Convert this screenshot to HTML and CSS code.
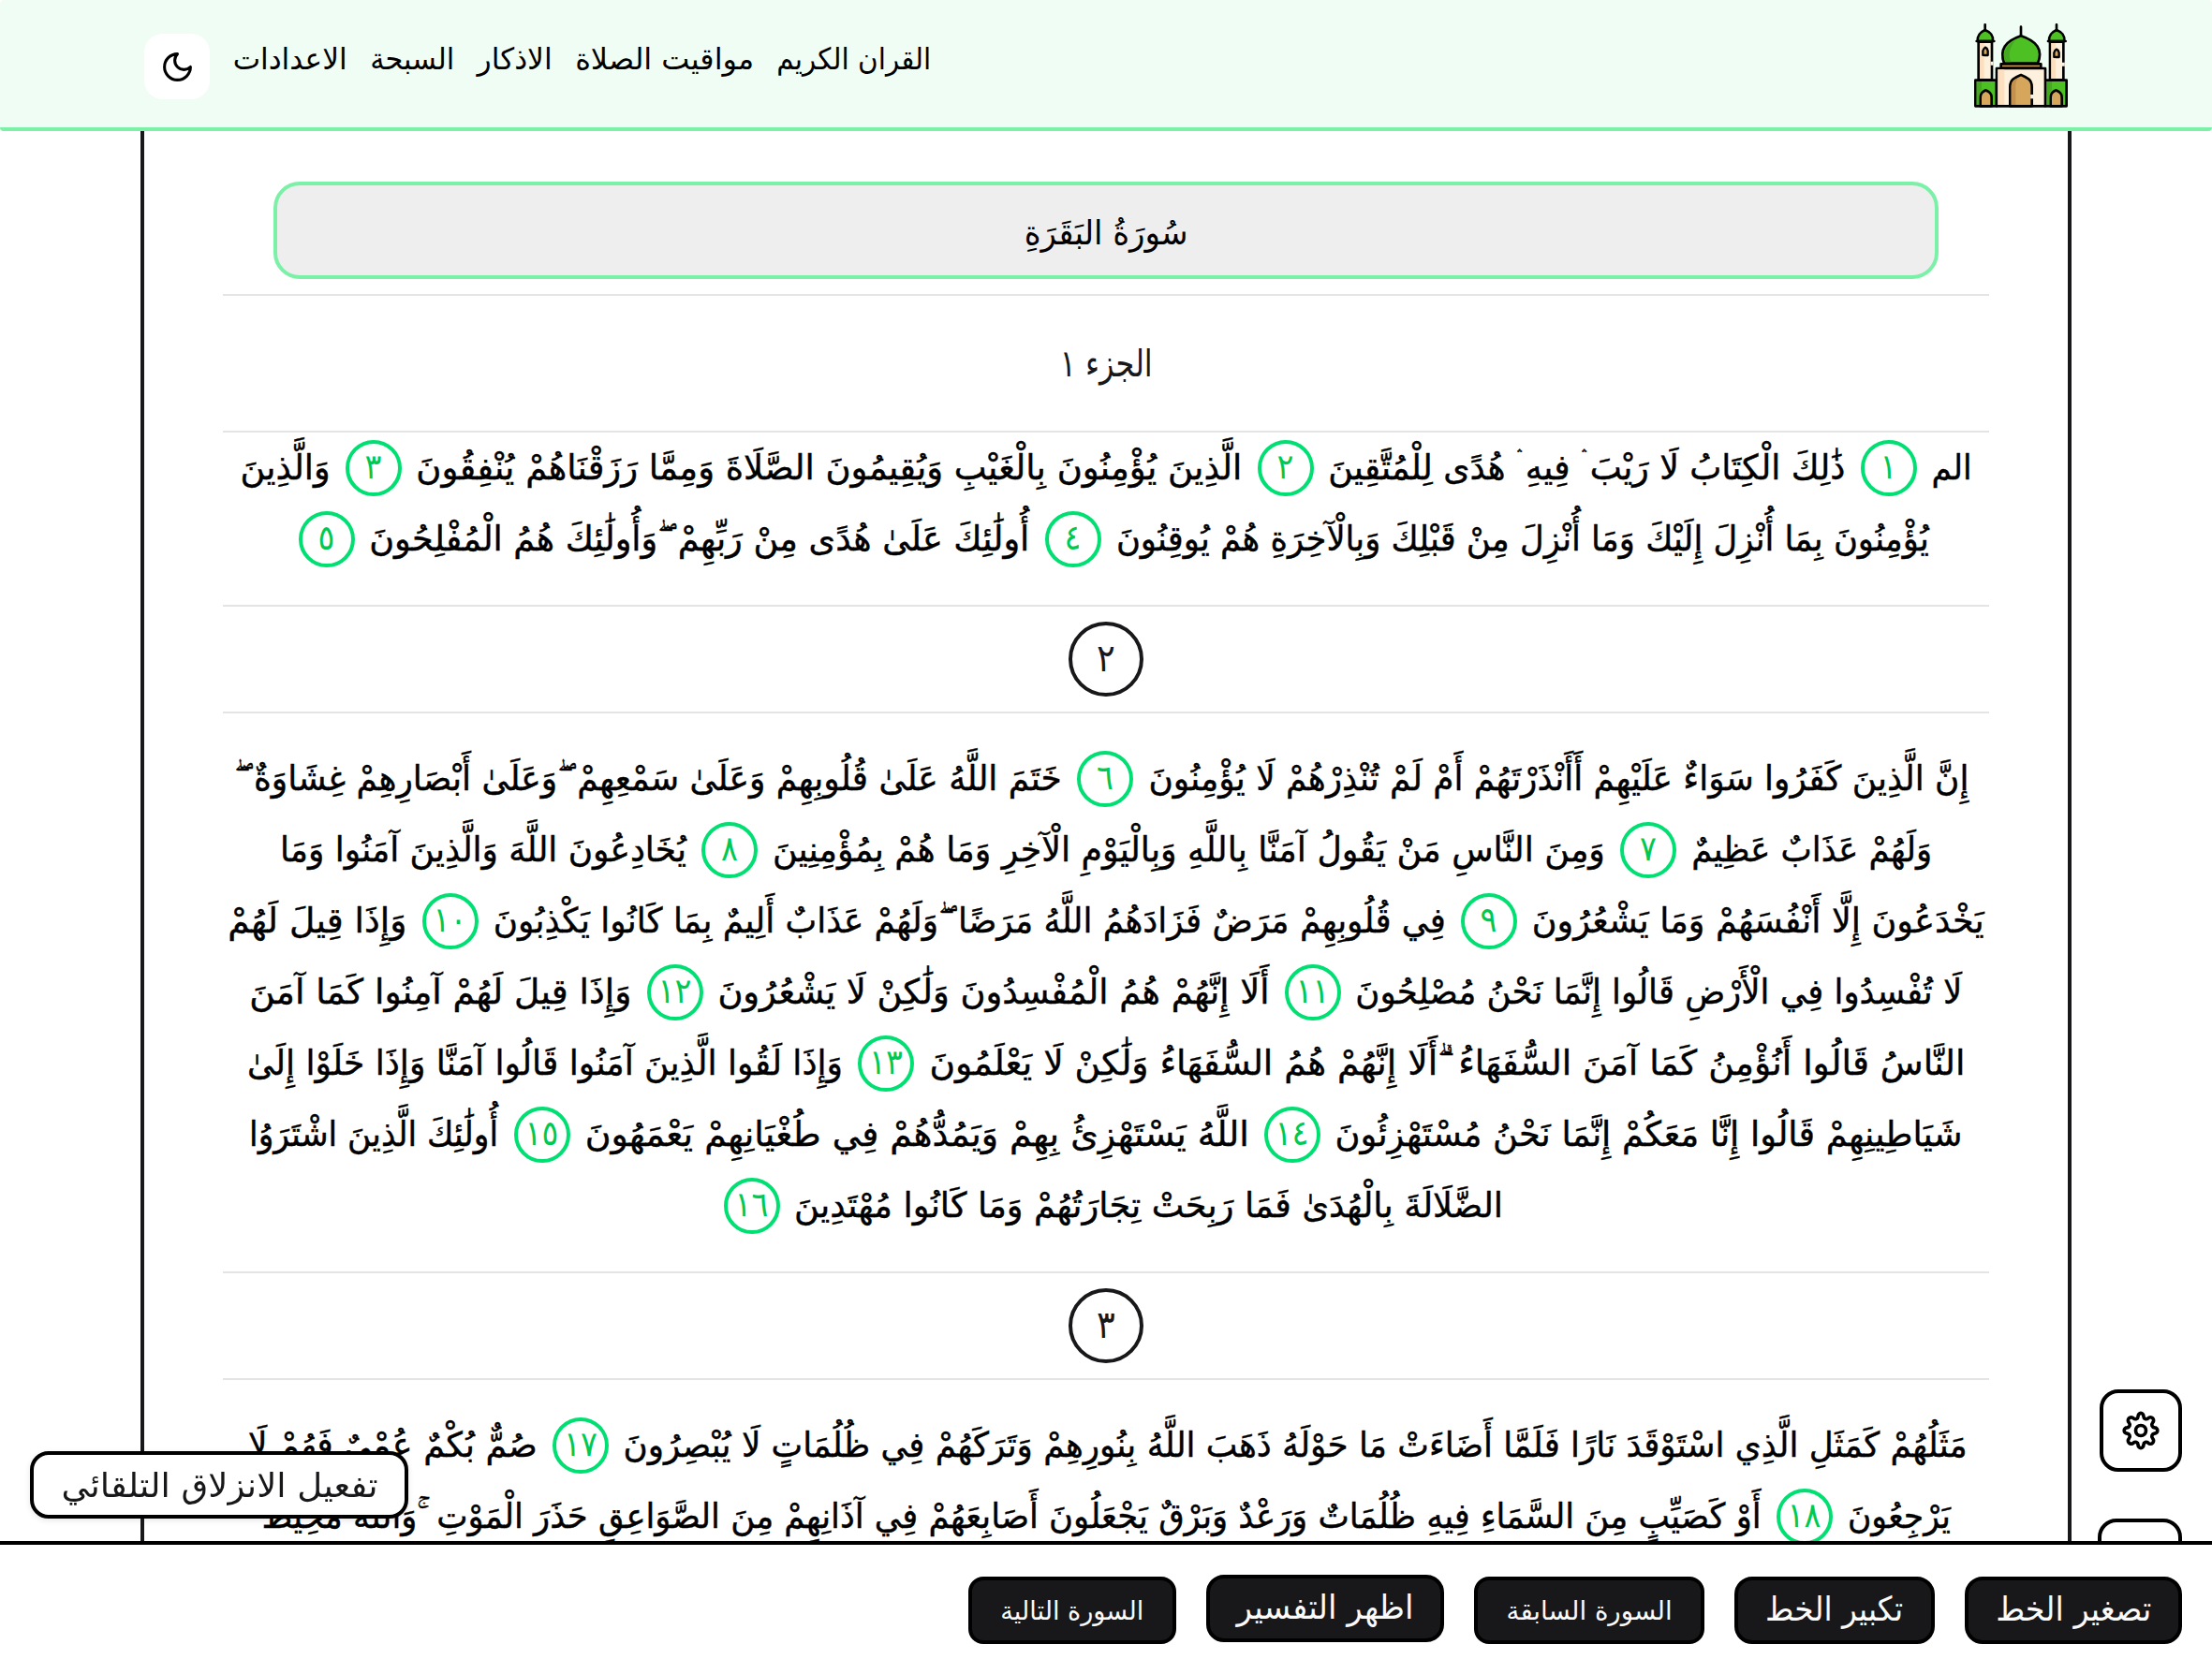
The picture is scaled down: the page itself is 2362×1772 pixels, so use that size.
FILE: index.html
```html
<!DOCTYPE html>
<html lang="ar" dir="rtl">
<head>
<meta charset="utf-8">
<title>سورة البقرة</title>
<link rel="stylesheet" href="styles.css">
</head>
<body>
<header class="header">
  <svg class="logo" viewBox="84 75 300 270" aria-hidden="true">
    <g stroke="#000" stroke-width="8" stroke-linejoin="round" stroke-linecap="round">
      <path fill="none" d="M119 79V96M348 79V96M234 86V115"/>
      <path fill="#fdf0dc" d="M98 134H141V256H98ZM327 134H370V256H327Z"/>
      <path fill="#4dc124" d="M95 132C94 110 106 102 119 96C134 102 146 110 144 132ZM324 132C323 110 335 102 348 96C363 102 375 110 373 132Z"/>
      <path fill="none" d="M92 132H148M321 132H377"/>
      <path fill="#4dc124" d="M180 203C164 158 184 132 234 115C284 132 306 158 288 203Z"/>
      <path fill="#d6a65c" d="M170 205H298V218H170Z"/>
      <path fill="#4dc124" d="M88 257H156V340H88ZM312 257H380V340H312Z"/>
      <path fill="#fdf0dc" d="M156 219H312V340H156Z"/>
      <path fill="#d6a65c" d="M199 340V278C199 256 214 248 234 240C254 248 269 256 269 278V340Z"/>
      <path fill="#d6a65c" d="M104 340V312C104 298 112 294 121 289C131 294 140 298 140 312V340ZM329 340V312C329 298 337 294 346 289C356 294 365 298 365 312V340Z"/>
      <path fill="#d6a65c" stroke-width="7" d="M112 177V163Q114 154 120 152Q126 154 128 163V177ZM340 183V169Q342 160 348 158Q354 160 356 169V183Z"/>
    </g>
    <path fill="#46a822" d="M184 199C172 164 190 142 217 128C194 156 195 179 202 199ZM92 261H108V286Q101 296 100 306V336H92ZM316 261H333V286Q326 296 325 306V336H316Z"/>
    <path fill="#fbdfbe" d="M102 138H116V150L108 160V181H116V252H102ZM331 138H345V152L336 166V187H345V252H331ZM160 223H181V336H160Z"/>
    <path fill="#c4924f" d="M203 336V280C203 262 210 256 225 250C217 262 217 270 217 280V336Z"/>
    <path stroke="#fdf0dc" stroke-width="9" d="M141 197V209M370 200V212"/>
    <path stroke="#fdf0dc" stroke-width="9" d="M269 303V316"/>
  </svg>
  <nav class="nav">
    <a class="nav-link fit" data-w="165">القران الكريم</a>
    <a class="nav-link fit" data-w="191">مواقيت الصلاة</a>
    <a class="nav-link fit" data-w="80">الاذكار</a>
    <a class="nav-link fit" data-w="90">السبحة</a>
    <a class="nav-link fit" data-w="122">الاعدادات</a>
    <button class="theme" aria-label="الوضع الليلي">
      <svg viewBox="0 0 24 24"><path d="M12 3a6 6 0 0 0 9 9 9 9 0 1 1-9-9Z"/></svg>
    </button>
  </nav>
</header>

<main class="page">
  <h1 class="surah"><span class="fit" data-w="175">سُورَةُ البَقَرَةِ</span></h1>
  <div class="juz"><span class="fit" data-w="99">الجزء ١</span></div>

  <section class="verses verses--first">
    <div class="row"><span class="fit" data-w="43">الم</span><b class="num">١</b><span class="fit" data-w="552">ذَٰلِكَ الْكِتَابُ لَا رَيْبَ ۛ فِيهِ ۛ هُدًى لِلْمُتَّقِينَ</span><b class="num">٢</b><span class="fit" data-w="882">الَّذِينَ يُؤْمِنُونَ بِالْغَيْبِ وَيُقِيمُونَ الصَّلَاةَ وَمِمَّا رَزَقْنَاهُمْ يُنْفِقُونَ</span><b class="num">٣</b><span class="fit" data-w="96">وَالَّذِينَ</span></div>
    <div class="row"><span class="fit" data-w="868">يُؤْمِنُونَ بِمَا أُنْزِلَ إِلَيْكَ وَمَا أُنْزِلَ مِنْ قَبْلِكَ وَبِالْآخِرَةِ هُمْ يُوقِنُونَ</span><b class="num">٤</b><span class="fit" data-w="705">أُولَٰئِكَ عَلَىٰ هُدًى مِنْ رَبِّهِمْ&nbsp;&nbsp;ۖوَأُولَٰئِكَ هُمُ الْمُفْلِحُونَ</span><b class="num">٥</b></div>
  </section>

  <div class="marker"><span>٢</span></div>

  <section class="verses">
    <div class="row row--pause"><span class="fit" data-w="876">إِنَّ الَّذِينَ كَفَرُوا سَوَاءٌ عَلَيْهِمْ أَأَنْذَرْتَهُمْ أَمْ لَمْ تُنْذِرْهُمْ لَا يُؤْمِنُونَ</span><b class="num">٦</b><span class="fit" data-w="884">خَتَمَ اللَّهُ عَلَىٰ قُلُوبِهِمْ وَعَلَىٰ سَمْعِهِمْ&nbsp;&nbsp;ۖوَعَلَىٰ أَبْصَارِهِمْ غِشَاوَةٌ&nbsp;&nbsp;ۖ</span></div>
    <div class="row"><span class="fit" data-w="257">وَلَهُمْ عَذَابٌ عَظِيمٌ</span><b class="num">٧</b><span class="fit" data-w="889">وَمِنَ النَّاسِ مَنْ يَقُولُ آمَنَّا بِاللَّهِ وَبِالْيَوْمِ الْآخِرِ وَمَا هُمْ بِمُؤْمِنِينَ</span><b class="num">٨</b><span class="fit" data-w="434">يُخَادِعُونَ اللَّهَ وَالَّذِينَ آمَنُوا وَمَا</span></div>
    <div class="row"><span class="fit" data-w="483">يَخْدَعُونَ إِلَّا أَنْفُسَهُمْ وَمَا يَشْعُرُونَ</span><b class="num">٩</b><span class="fit" data-w="1017">فِي قُلُوبِهِمْ مَرَضٌ فَزَادَهُمُ اللَّهُ مَرَضًا&nbsp;&nbsp;ۖوَلَهُمْ عَذَابٌ أَلِيمٌ بِمَا كَانُوا يَكْذِبُونَ</span><b class="num">١٠</b><span class="fit" data-w="191">وَإِذَا قِيلَ لَهُمْ</span></div>
    <div class="row"><span class="fit" data-w="648">لَا تُفْسِدُوا فِي الْأَرْضِ قَالُوا إِنَّمَا نَحْنُ مُصْلِحُونَ</span><b class="num">١١</b><span class="fit" data-w="589">أَلَا إِنَّهُمْ هُمُ الْمُفْسِدُونَ وَلَٰكِنْ لَا يَشْعُرُونَ</span><b class="num">١٢</b><span class="fit" data-w="408">وَإِذَا قِيلَ لَهُمْ آمِنُوا كَمَا آمَنَ</span></div>
    <div class="row"><span class="fit" data-w="1106">النَّاسُ قَالُوا أَنُؤْمِنُ كَمَا آمَنَ السُّفَهَاءُ&nbsp;&nbsp;ۗأَلَا إِنَّهُمْ هُمُ السُّفَهَاءُ وَلَٰكِنْ لَا يَعْلَمُونَ</span><b class="num">١٣</b><span class="fit" data-w="636">وَإِذَا لَقُوا الَّذِينَ آمَنُوا قَالُوا آمَنَّا وَإِذَا خَلَوْا إِلَىٰ</span></div>
    <div class="row"><span class="fit" data-w="670">شَيَاطِينِهِمْ قَالُوا إِنَّا مَعَكُمْ إِنَّمَا نَحْنُ مُسْتَهْزِئُونَ</span><b class="num">١٤</b><span class="fit" data-w="709">اللَّهُ يَسْتَهْزِئُ بِهِمْ وَيَمُدُّهُمْ فِي طُغْيَانِهِمْ يَعْمَهُونَ</span><b class="num">١٥</b><span class="fit" data-w="266">أُولَٰئِكَ الَّذِينَ اشْتَرَوُا</span></div>
    <div class="row"><span class="fit" data-w="757">الضَّلَالَةَ بِالْهُدَىٰ فَمَا رَبِحَتْ تِجَارَتُهُمْ وَمَا كَانُوا مُهْتَدِينَ</span><b class="num">١٦</b></div>
  </section>

  <div class="marker"><span>٣</span></div>

  <section class="verses">
    <div class="row row--shift"><span class="fit" data-w="1435">مَثَلُهُمْ كَمَثَلِ الَّذِي اسْتَوْقَدَ نَارًا فَلَمَّا أَضَاءَتْ مَا حَوْلَهُ ذَهَبَ اللَّهُ بِنُورِهِمْ وَتَرَكَهُمْ فِي ظُلُمَاتٍ لَا يُبْصِرُونَ</span><b class="num">١٧</b><span class="fit" data-w="309">صُمٌّ بُكْمٌ عُمْيٌ فَهُمْ لَا</span></div>
    <div class="row"><span class="fit" data-w="110">يَرْجِعُونَ</span><b class="num">١٨</b><span class="fit" data-w="1601">أَوْ كَصَيِّبٍ مِنَ السَّمَاءِ فِيهِ ظُلُمَاتٌ وَرَعْدٌ وَبَرْقٌ يَجْعَلُونَ أَصَابِعَهُمْ فِي آذَانِهِمْ مِنَ الصَّوَاعِقِ حَذَرَ الْمَوْتِ&nbsp;&nbsp;ۚوَاللَّهُ مُحِيطٌ</span></div>
  </section>
</main>

<div class="side">
  <button class="tool" aria-label="الاعدادات">
    <svg viewBox="0 0 24 24"><circle cx="12" cy="12" r="3"/><path d="M10.4 3.7a1.6 1.9 0 0 1 3.2 0c.1 1.6 1.6 2.1 2.7 1.1a1.65 1.65 0 0 1 2.6 2.6c-1 1.2-.4 2.7 1.1 2.9a1.65 1.65 0 0 1 0 3.4c-1.5.2-2.1 1.7-1.1 2.9a1.65 1.65 0 0 1-2.6 2.6c-1.1-1-2.6-.5-2.7 1.1a1.6 1.9 0 0 1-3.2 0c-.1-1.6-1.6-2.1-2.7-1.1a1.65 1.65 0 0 1-2.6-2.6c1-1.2.4-2.7-1.1-2.9a1.65 1.65 0 0 1 0-3.4c1.5-.2 2.1-1.7 1.1-2.9a1.65 1.65 0 0 1 2.6-2.6c1.1 1 2.6.5 2.7-1.1Z"/></svg>
  </button>
  <button class="tool tool--wide" aria-label="المزيد"></button>
</div>

<button class="auto"><span class="fit" data-w="338">تفعيل الانزلاق التلقائي</span></button>

<footer class="bar">
  <button class="btn" style="width:232px"><span class="fit" data-w="166">تصغير الخط</span></button>
  <button class="btn" style="width:214px"><span class="fit" data-w="147">تكبير الخط</span></button>
  <button class="btn btn--small" style="width:246px"><span class="fit" data-w="177">السورة السابقة</span></button>
  <button class="btn btn--raised" style="width:254px"><span class="fit" data-w="189">اظهر التفسير</span></button>
  <button class="btn btn--small" style="width:222px"><span class="fit" data-w="153">السورة التالية</span></button>
</footer>
<script src="fit.js"></script>
</body>
</html>
```
FILE: styles.css
```css
* { box-sizing: border-box; margin: 0; }
html, body { height: 100%; overflow: hidden; }
body {
  font-family: "DejaVu Sans Condensed", "DejaVu Sans", sans-serif;
  background: #fff;
  color: #000;
  display: flex;
  flex-direction: column;
}
button { font: inherit; padding: 0; display: flex; align-items: center; justify-content: center; }
.fit { display: inline-block; flex: none; white-space: nowrap; transform-origin: right center; }

.header {
  flex: none;
  height: 140px;
  padding: 0 154px;
  background: #f0fdf4;
  border-bottom: 4px solid #7bf1a8;
  border-radius: 4px;
  display: flex;
  align-items: flex-start;
  justify-content: space-between;
}
.logo { width: 100px; height: 90px; margin-top: 25px; }
.nav { display: flex; align-items: flex-start; gap: 24.500px; padding-top: 36px; }
.nav-link { font-size: 32px; line-height: 54px; }
.theme { width: 70px; height: 70px; border: 0; border-radius: 20px; background: #fff; }
.theme svg { width: 37px; height: 37px; fill: none; stroke: #000; stroke-width: 2; stroke-linejoin: round; }

.page {
  flex: 1;
  min-height: 0;
  overflow: hidden;
  width: 2062px;
  margin: 0 auto;
  padding: 54px 84px 0;
  border: solid #18181b;
  border-width: 0 4px;
}
.surah {
  height: 104px;
  margin: 0 54px 16px;
  padding-top: 5px;
  border: 4px solid #7bf1a8;
  border-radius: 28px;
  background: #eee;
  font-size: 36px;
  font-weight: 400;
  display: flex;
  align-items: center;
  justify-content: center;
}
.juz {
  height: 148px;
  border: solid #e4e4e7;
  border-width: 2px 0;
  color: #18181b;
  font-size: 40px;
  display: flex;
  align-items: center;
  justify-content: center;
}
.verses { padding: 32px 0; font-size: 37px; -webkit-text-stroke: 0.4px currentColor; }
.verses--first { padding-top: 0; }
.row { height: 76px; display: flex; align-items: center; justify-content: center; line-height: 60px; }
.row--pause { padding-inline-start: 10px; }
.row--shift { padding-inline-end: 4px; }
.num {
  flex: none;
  width: 60px;
  height: 60px;
  margin: 0 16px;
  border: 4px solid #00df72;
  border-radius: 50%;
  color: #00c951;
  font-size: 37px;
  font-weight: 400;
  line-height: 49px;
  text-align: center;
  -webkit-text-stroke: 0;
}
.marker {
  height: 116px;
  border: solid #e4e4e7;
  border-width: 2px 0;
  display: flex;
  align-items: center;
  justify-content: center;
}
.marker span {
  width: 80px;
  height: 80px;
  border: 4px solid #18181b;
  border-radius: 50%;
  color: #18181b;
  font-size: 41px;
  line-height: 70px;
  text-align: center;
}

.side {
  position: fixed;
  top: 1484px;
  right: 32px;
  display: flex;
  flex-direction: column;
  gap: 50px;
}
.tool { width: 88px; height: 88px; border: 4px solid #000; border-radius: 20px; background: #fff; }
.tool--wide { width: 90px; }
.tool svg { width: 44px; height: 44px; fill: none; stroke: #000; stroke-width: 2; }

.auto {
  position: fixed;
  left: 32px;
  top: 1550px;
  width: 404px;
  height: 72px;
  border: 4px solid #000;
  border-radius: 20px;
  background: #fff;
  color: #18181b;
  font-size: 36px;
  box-shadow: 0 2px 6px rgba(0, 0, 0, .1);
}
.bar {
  position: relative;
  flex: none;
  height: 126px;
  padding: 34px 32px 0;
  border-top: 4px solid #000;
  background: #fff;
  display: flex;
  gap: 32px;
}
.btn {
  height: 72px;
  padding-bottom: 3px;
  border: 4px solid #000;
  border-radius: 19px;
  background: #18181b;
  color: #fafafa;
  font-size: 36px;
}
.btn--small { padding-bottom: 0; font-size: 28px; border-radius: 16px; }
.btn--raised { margin-top: -2px; }
```
FILE: fit.js
```js
document.querySelectorAll('.fit').forEach(function (el) {
  var natural = el.getBoundingClientRect().width;
  var width = Number(el.dataset.w);
  el.style.transform = 'scaleX(' + width / natural + ')';
  el.style.marginInlineEnd = (width - natural) + 'px';
});
```
